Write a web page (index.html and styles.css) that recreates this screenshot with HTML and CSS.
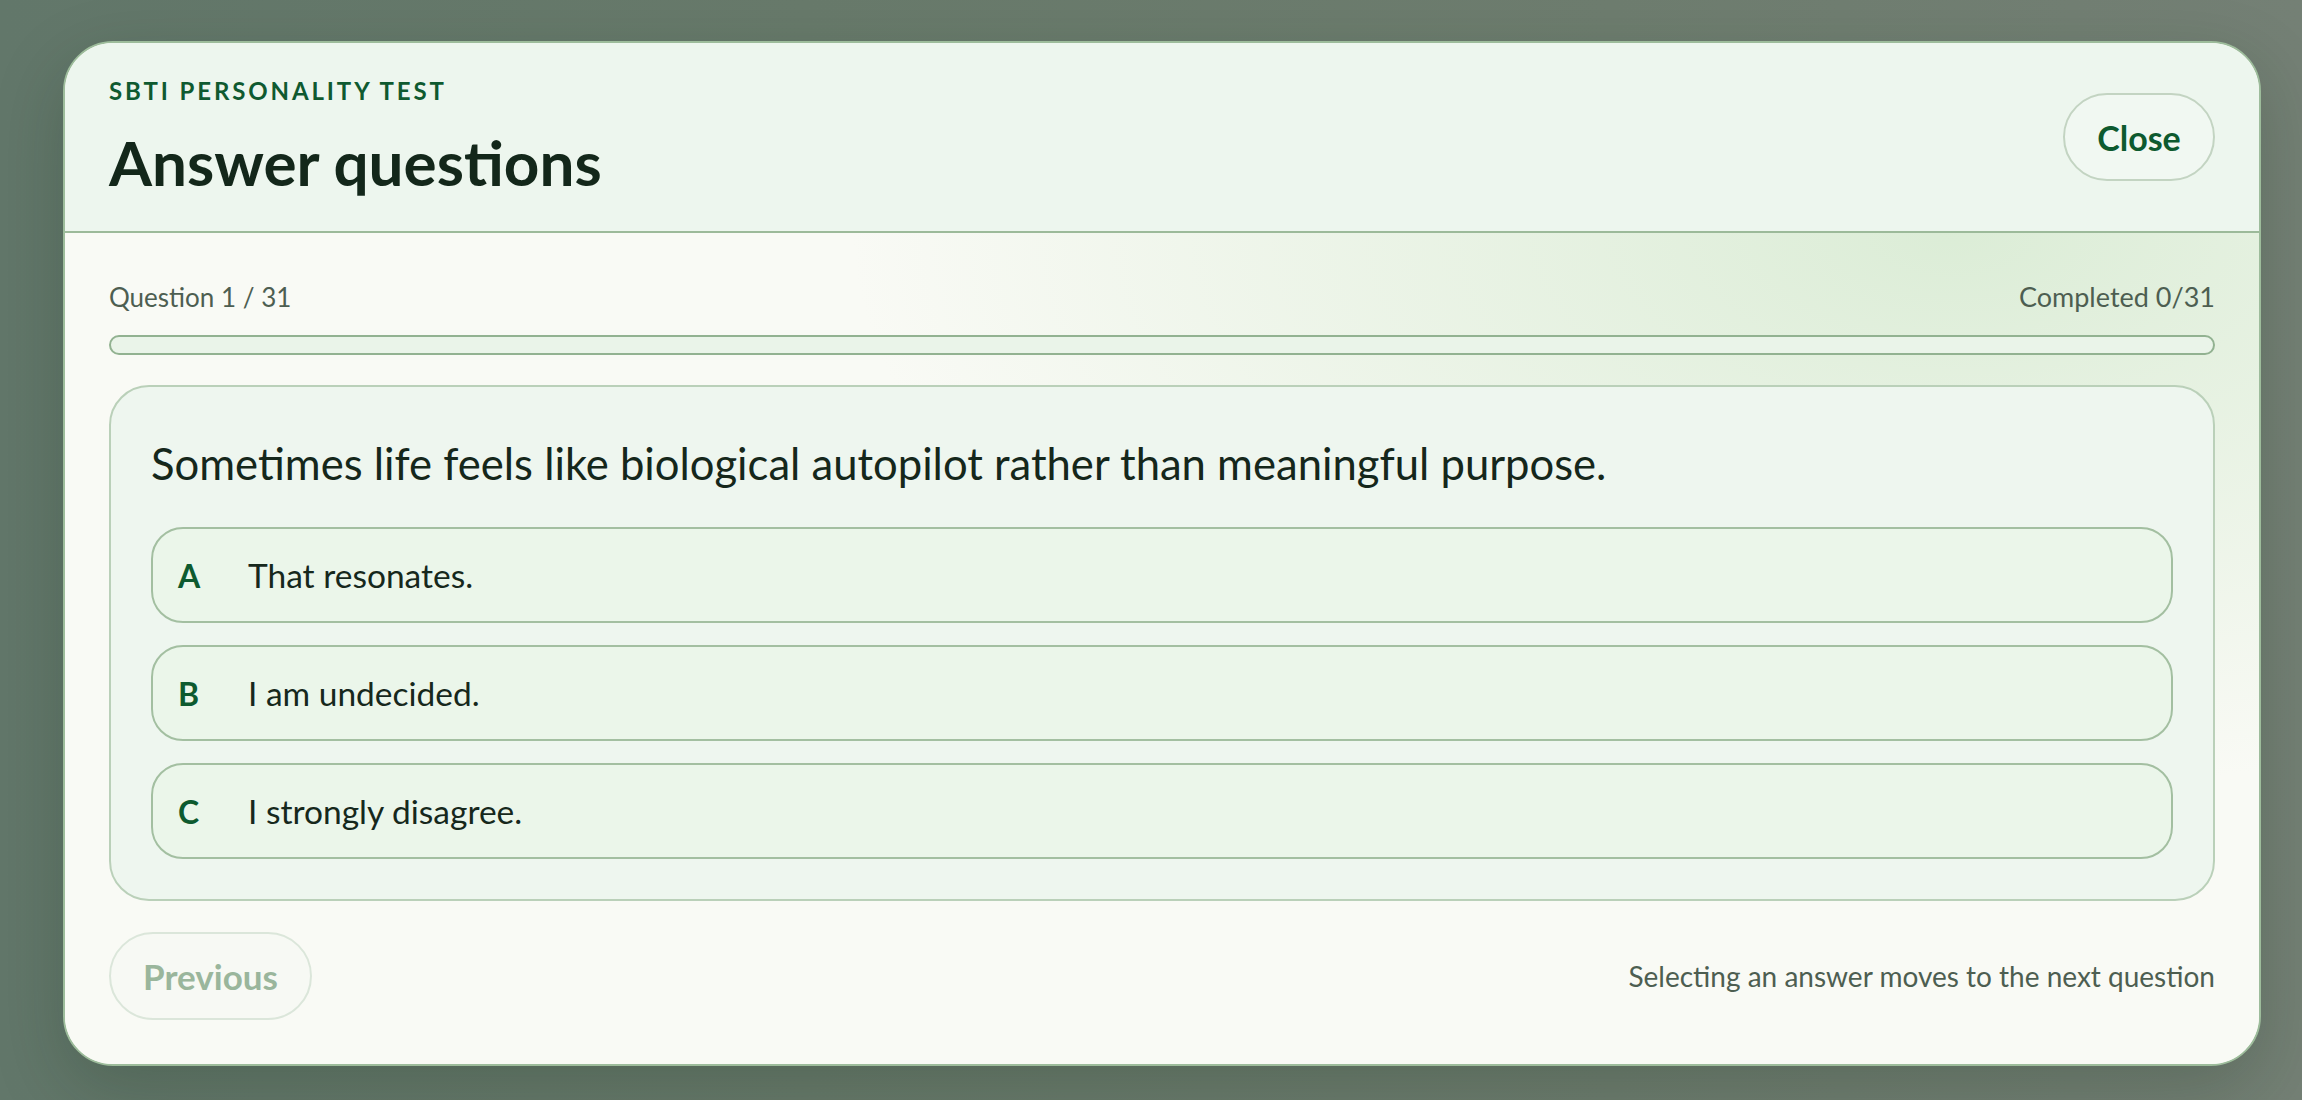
FILE: index.html
```html
<!DOCTYPE html>
<html lang="en">
<head>
<meta charset="utf-8">
<title>SBTI Personality Test – Answer questions</title>
<link rel="stylesheet" href="styles.css">
</head>
<body>
<div class="overlay">
  <section class="dialog" role="dialog" aria-labelledby="dlg-title">
    <header class="dialog-header">
      <div class="heading">
        <p class="eyebrow">SBTI PERSONALITY TEST</p>
        <h1 class="title" id="dlg-title">Answer questions</h1>
      </div>
      <button class="btn btn-close" type="button">Close</button>
    </header>
    <div class="dialog-body">
      <div class="meta-row">
        <span class="meta">Question 1 / 31</span>
        <span class="meta meta-end">Completed 0/31</span>
      </div>
      <div class="progress"><div class="progress-fill" style="width:0%"></div></div>
      <div class="question-card">
        <p class="question">Sometimes life feels like biological autopilot rather than meaningful purpose.</p>
        <div class="options">
          <button class="option" type="button"><span class="opt-key">A</span><span class="opt-text">That resonates.</span></button>
          <button class="option" type="button"><span class="opt-key">B</span><span class="opt-text">I am undecided.</span></button>
          <button class="option" type="button"><span class="opt-key">C</span><span class="opt-text">I strongly disagree.</span></button>
        </div>
      </div>
      <footer class="dialog-footer">
        <button class="btn btn-prev" type="button" disabled>Previous</button>
        <span class="hint">Selecting an answer moves to the next question</span>
      </footer>
    </div>
  </section>
</div>
</body>
</html>
```
FILE: styles.css
```css
* { box-sizing: border-box; }
html, body { margin: 0; padding: 0; }
body {
  width: 2302px;
  height: 1100px;
  overflow: hidden;
  font-family: Lato, "Noto Sans", "Liberation Sans", sans-serif;
  background: #6b7b6c;
}
.overlay {
  height: 1100px;
  padding: 41px 41px 0 63px;
  background: linear-gradient(90deg, #62776a 0%, #687a6b 35%, #6e7d6f 70%, #748075 100%);
}
.dialog {
  width: 2198px;
  border: 2px solid #9dbc9b;
  border-radius: 50px;
  overflow: hidden;
  background: #f9faf5;
  box-shadow: 0 24px 70px rgba(20, 40, 25, 0.22);
}
.dialog-header {
  display: flex;
  align-items: center;
  justify-content: space-between;
  padding: 32px 44px 32px 44px;
  background: #edf6ee;
  border-bottom: 2px solid #9cba9a;
}
.heading { display: flex; flex-direction: column; gap: 18px; }
.eyebrow {
  margin: 0;
  font-size: 24px;
  line-height: 32px;
  font-weight: 700;
  letter-spacing: 0.12em;
  color: #0f5a30;
}
.title {
  margin: 0;
  font-size: 62px;
  line-height: 74px;
  font-weight: 700;
  color: #13271a;
}
.btn {
  font-family: inherit;
  font-weight: 700;
  font-size: 34px;
  height: 88px;
  border-radius: 999px;
  background: transparent;
  padding: 0 34px;
  cursor: pointer;
}
.btn-close {
  width: 152px;
  padding: 0;
  background: #f1f8f2;
  border: 2px solid #c3d4c2;
  color: #0d5a2f;
}
.dialog-body {
  padding: 48px 44px 44px 44px;
  background:
    radial-gradient(1100px 560px at 86% 0%, rgba(218, 236, 213, 0.95), rgba(218, 236, 213, 0) 100%),
    #f9faf5;
}
.meta-row {
  display: flex;
  justify-content: space-between;
  height: 32px;
}
.meta {
  font-size: 26px;
  line-height: 32px;
  color: #4d5e51;
}
.meta-end { font-size: 27px; }
.hint {
  font-size: 28px;
  line-height: 32px;
  color: #4d5e51;
}
.progress {
  margin-top: 22px;
  height: 20px;
  border: 2px solid #92b291;
  border-radius: 999px;
  background: #eaf4e9;
  overflow: hidden;
}
.progress-fill { height: 100%; background: #2f7a47; }
.question-card {
  margin-top: 30px;
  border: 2px solid #bad0b9;
  border-radius: 40px;
  background: #eef6ef;
  padding: 50px 40px 40px 40px;
}
.question {
  margin: 0;
  font-size: 43.6px;
  line-height: 52px;
  color: #15271b;
}
.options {
  margin-top: 38px;
  display: flex;
  flex-direction: column;
  gap: 22px;
}
.option {
  display: flex;
  align-items: center;
  height: 96px;
  padding: 0 0 0 25px;
  border: 2px solid #a3bfa1;
  border-radius: 32px;
  background: #ebf6ea;
  font-family: inherit;
  text-align: left;
  cursor: pointer;
}
.opt-key {
  width: 70px;
  font-size: 32px;
  font-weight: 700;
  color: #0d5a2f;
}
.opt-text {
  font-size: 33.5px;
  color: #16281c;
}
.dialog-footer {
  margin-top: 31px;
  display: flex;
  align-items: center;
  justify-content: space-between;
}
.btn-prev {
  width: 203px;
  padding: 0;
  font-size: 35px;
  border: 2px solid #dbe6da;
  background: #f7f9f4;
  color: #9ab69c;
  cursor: default;
}
```
